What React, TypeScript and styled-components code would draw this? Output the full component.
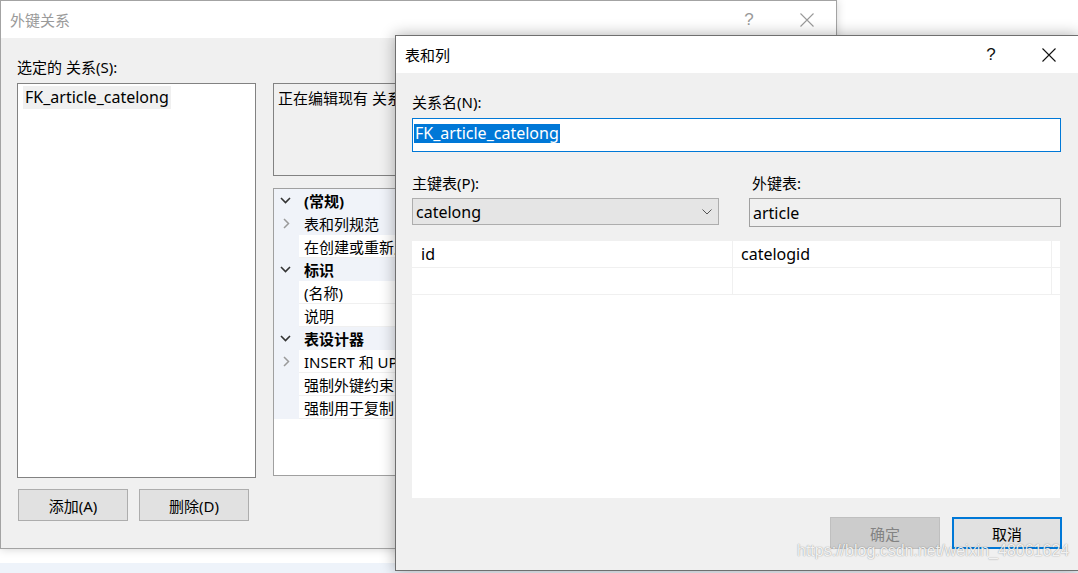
import React from "react";
import styled, { createGlobalStyle } from "styled-components";

const GlobalStyle = createGlobalStyle`
  html, body {
    margin: 0;
    padding: 0;
  }
  body {
    font-family: "Noto Sans", "Noto Sans CJK SC", sans-serif;
    font-size: 16px;
    color: #000;
  }
`;

const Desktop = styled.div`
  position: relative;
  width: 1078px;
  height: 573px;
  overflow: hidden;
  background: linear-gradient(to bottom, #ffffff 0, #ffffff 563px, #eef3fa 563px);
`;

const Window = styled.div<{ $left: number; $top: number; $w: number; $h: number; $active?: boolean }>`
  position: absolute;
  left: ${(p) => p.$left}px;
  top: ${(p) => p.$top}px;
  width: ${(p) => p.$w}px;
  height: ${(p) => p.$h}px;
  box-sizing: border-box;
  display: flex;
  flex-direction: column;
  background: #f0f0f0;
  border: 1px solid ${(p) => (p.$active ? "#6f6f6f" : "#a3a3a3")};
  box-shadow: ${(p) => (p.$active ? "0 0 14px rgba(0,0,0,0.32)" : "0 0 9px rgba(0,0,0,0.18)")};
`;

const TitleBar = styled.div<{ $active?: boolean }>`
  height: 37px;
  flex: none;
  display: flex;
  align-items: center;
  background: #fff;
  color: ${(p) => (p.$active ? "#000" : "#9a9a9a")};
  padding-left: 9px;
`;

const Title = styled.div`
  flex: 1;
  font-size: 15px;
  line-height: 20px;
  padding-top: 1px;
`;

const CaptionButton = styled.div<{ $dim?: boolean }>`
  width: 58px;
  height: 37px;
  display: flex;
  align-items: center;
  justify-content: center;
  font-family: "Liberation Sans", sans-serif;
  font-size: 17px;
  color: ${(p) => (p.$dim ? "#9a9a9a" : "#111")};
`;

const CloseGlyph = ({ color }: { color: string }) => (
  <svg width="16" height="16" viewBox="0 0 16 16">
    <path d="M1.5 1.5 L14.5 14.5 M14.5 1.5 L1.5 14.5" stroke={color} strokeWidth="1.1" fill="none" />
  </svg>
);

const BackBody = styled.div`
  flex: 1;
  display: grid;
  grid-template-columns: 239px 1fr;
  column-gap: 17px;
  padding: 19px 16px 0 16px;
`;

const Column = styled.div<{ $top?: number }>`
  display: flex;
  flex-direction: column;
  min-width: 0;
  padding-top: ${(p) => p.$top ?? 0}px;
`;

const Label = styled.div<{ $indent?: number }>`
  height: 20px;
  line-height: 20px;
  font-size: 15px;
  padding-left: ${(p) => p.$indent ?? 0}px;
  white-space: nowrap;
`;

const ListBox = styled.div`
  margin-top: 6px;
  height: 395px;
  box-sizing: border-box;
  border: 1px solid #828282;
  background: #fff;
  padding: 2px 5px;
`;

const ListItem = styled.span`
  display: inline-block;
  background: #f0f0f0;
  height: 23px;
  line-height: 23px;
  padding: 0 2px;
`;

const ButtonRow = styled.div<{ $top: number; $end?: boolean }>`
  display: flex;
  gap: ${(p) => (p.$end ? 12 : 11)}px;
  margin-top: ${(p) => p.$top}px;
  padding-left: ${(p) => (p.$end ? 0 : 1)}px;
  justify-content: ${(p) => (p.$end ? "flex-end" : "flex-start")};
`;

const Button = styled.div<{ $disabled?: boolean; $focused?: boolean }>`
  width: 110px;
  height: 32px;
  box-sizing: border-box;
  display: flex;
  align-items: center;
  justify-content: center;
  font-size: 15px;
  background: ${(p) => (p.$disabled ? "#cccccc" : "#e1e1e1")};
  color: ${(p) => (p.$disabled ? "#838383" : "#000")};
  border: ${(p) => (p.$focused ? "2px solid #0078d7" : p.$disabled ? "1px solid #bfbfbf" : "1px solid #adadad")};
`;

const DescBox = styled.div`
  height: 93px;
  box-sizing: border-box;
  border: 1px solid #828282;
  background: #f0f0f0;
  padding: 4px 4px;
  font-size: 15px;
  line-height: 20px;
  white-space: nowrap;
  overflow: hidden;
`;

const PropGrid = styled.div`
  margin-top: 12px;
  height: 288px;
  box-sizing: border-box;
  border: 1px solid #a0a0a0;
  background: #fff;
  overflow: hidden;
`;

type RowKind = "category" | "expand" | "item";

const PropRow = styled.div<{ $kind: RowKind }>`
  display: flex;
  height: 23px;
  background: #f0f3f9;
  font-size: 15px;
  font-weight: ${(p) => (p.$kind === "category" ? 700 : 400)};
`;

const Gutter = styled.div`
  width: 25px;
  flex: none;
  display: flex;
  align-items: center;
  justify-content: center;
`;

const NameCell = styled.div<{ $kind: RowKind }>`
  width: ${(p) => (p.$kind === "category" ? "auto" : "106px")};
  flex: ${(p) => (p.$kind === "category" ? 1 : "none")};
  display: flex;
  align-items: center;
  padding-left: 5px;
  white-space: nowrap;
  overflow: hidden;
  background: ${(p) => (p.$kind === "item" ? "#fff" : "transparent")};
  border-bottom: 1px solid ${(p) => (p.$kind === "item" ? "#f0f0f0" : "transparent")};
`;

const ValueCell = styled.div<{ $kind: RowKind }>`
  flex: 1;
  background: ${(p) => (p.$kind === "item" ? "#fff" : "transparent")};
  border-bottom: 1px solid ${(p) => (p.$kind === "item" ? "#f0f0f0" : "transparent")};
`;

const Chevron = ({ open }: { open: boolean }) =>
  open ? (
    <svg width="11" height="7" viewBox="0 0 11 7" style={{ marginLeft: -3 }}>
      <path d="M1 1 L5.5 5.5 L10 1" stroke="#333" strokeWidth="1.6" fill="none" />
    </svg>
  ) : (
    <svg width="7" height="11" viewBox="0 0 7 11">
      <path d="M1 1 L5.5 5.5 L1 10" stroke="#9a9a9a" strokeWidth="1.5" fill="none" />
    </svg>
  );

const FrontBody = styled.div`
  flex: 1;
  display: flex;
  flex-direction: column;
  padding: 19px 16px 0 16px;
`;

const NameInput = styled.div`
  margin-top: 6px;
  width: 649px;
  height: 34px;
  box-sizing: border-box;
  border: 1px solid #0078d7;
  background: #fff;
  padding: 3px 1px;
`;

const Selection = styled.span`
  display: inline-block;
  height: 19px;
  line-height: 19px;
  background: #0078d7;
  color: #fff;
  padding: 0 1px;
`;

const FieldRow = styled.div`
  display: flex;
  gap: 30px;
  margin-top: 21px;
  margin-bottom: 14px;
`;

const Field = styled.div<{ $w: number }>`
  width: ${(p) => p.$w}px;
  display: flex;
  flex-direction: column;
`;

const Combo = styled.div`
  margin-top: 5px;
  height: 27px;
  box-sizing: border-box;
  background: #e5e5e5;
  border: 1px solid #adadad;
  display: flex;
  align-items: center;
  padding: 0 6px 0 3px;
  justify-content: space-between;
`;

const ReadOnlyBox = styled.div`
  margin-top: 5px;
  height: 29px;
  box-sizing: border-box;
  background: #f0f0f0;
  border: 1px solid #a0a0a0;
  display: flex;
  align-items: center;
  padding-left: 3px;
`;

const ColumnGrid = styled.div`
  width: 648px;
  height: 257px;
  background: #fff;
`;

const GridRow = styled.div`
  display: grid;
  grid-template-columns: 321px 319px;
  height: 26px;
  border-bottom: 1px solid #f0f0f0;
`;

const GridCell = styled.div<{ $pad: number }>`
  display: flex;
  align-items: center;
  padding-left: ${(p) => p.$pad}px;
  border-right: 1px solid #f0f0f0;
`;

const Watermark = styled.div`
  position: absolute;
  left: 797px;
  top: 542px;
  font-family: "Liberation Sans", Arial, sans-serif;
  font-size: 16px;
  line-height: 18px;
  color: rgba(255, 255, 255, 0.88);
  text-shadow: 0 0 1px rgba(0, 0, 0, 0.35), 0 0 2px rgba(0, 0, 0, 0.15);
  white-space: nowrap;
`;

const props: { kind: RowKind; text: string; open?: boolean }[] = [
  { kind: "category", text: "(常规)", open: true },
  { kind: "expand", text: "表和列规范", open: false },
  { kind: "item", text: "在创建或重新启用时检查现有数据" },
  { kind: "category", text: "标识", open: true },
  { kind: "item", text: "(名称)" },
  { kind: "item", text: "说明" },
  { kind: "category", text: "表设计器", open: true },
  { kind: "item", text: "INSERT 和 UPDATE 规范", open: false },
  { kind: "item", text: "强制外键约束" },
  { kind: "item", text: "强制用于复制" },
];

export default function App() {
  return (
    <>
      <GlobalStyle />
      <Desktop>
        <Window $left={0} $top={0} $w={837} $h={549}>
          <TitleBar>
            <Title>外键关系</Title>
            <CaptionButton $dim>?</CaptionButton>
            <CaptionButton $dim>
              <CloseGlyph color="#9a9a9a" />
            </CaptionButton>
          </TitleBar>
          <BackBody>
            <Column>
              <Label>选定的 关系(S):</Label>
              <ListBox>
                <ListItem>FK_article_catelong</ListItem>
              </ListBox>
              <ButtonRow $top={11}>
                <Button>添加(A)</Button>
                <Button>删除(D)</Button>
              </ButtonRow>
            </Column>
            <Column $top={26}>
              <DescBox>正在编辑现有 关系</DescBox>
              <PropGrid>
                {props.map((r) => (
                  <PropRow key={r.text} $kind={r.kind}>
                    <Gutter>{r.open !== undefined && <Chevron open={r.open} />}</Gutter>
                    <NameCell $kind={r.kind}>{r.text}</NameCell>
                    {r.kind !== "category" && <ValueCell $kind={r.kind} />}
                  </PropRow>
                ))}
              </PropGrid>
            </Column>
          </BackBody>
        </Window>

        <Window $left={395} $top={35} $w={684} $h={536} $active>
          <TitleBar $active>
            <Title>表和列</Title>
            <CaptionButton>?</CaptionButton>
            <CaptionButton>
              <CloseGlyph color="#111" />
            </CaptionButton>
          </TitleBar>
          <FrontBody>
            <Label>关系名(N):</Label>
            <NameInput>
              <Selection>FK_article_catelong</Selection>
            </NameInput>
            <FieldRow>
              <Field $w={307}>
                <Label>主键表(P):</Label>
                <Combo>
                  <span>catelong</span>
                  <svg width="10" height="6" viewBox="0 0 10 6">
                    <path d="M0.5 0.5 L5 5 L9.5 0.5" stroke="#555" strokeWidth="1" fill="none" />
                  </svg>
                </Combo>
              </Field>
              <Field $w={312}>
                <Label $indent={3}>外键表:</Label>
                <ReadOnlyBox>article</ReadOnlyBox>
              </Field>
            </FieldRow>
            <ColumnGrid>
              <GridRow>
                <GridCell $pad={9}>id</GridCell>
                <GridCell $pad={8}>catelogid</GridCell>
              </GridRow>
              <GridRow>
                <GridCell $pad={9} />
                <GridCell $pad={8} />
              </GridRow>
            </ColumnGrid>
            <ButtonRow $top={19} $end>
              <Button $disabled>确定</Button>
              <Button $focused>取消</Button>
            </ButtonRow>
          </FrontBody>
        </Window>

        <Watermark>https://blog.csdn.net/weixin_48061624</Watermark>
      </Desktop>
    </>
  );
}
